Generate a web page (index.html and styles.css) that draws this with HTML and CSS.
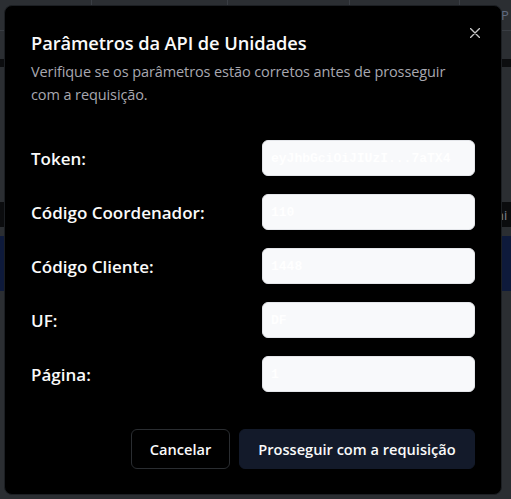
FILE: index.html
```html
<!DOCTYPE html>
<html lang="pt-BR">
<head>
<meta charset="utf-8">
<title>Parâmetros da API de Unidades</title>
<link rel="stylesheet" href="styles.css">
</head>
<body>
<div class="page">
  <div class="table-head">
    <div class="th th-1"></div>
    <div class="th th-2"></div>
    <div class="th th-3"></div>
    <div class="th th-4"></div>
    <div class="th th-5">P</div>
  </div>
  <div class="band-dark-thin"></div>
  <div class="spacer-a"></div>
  <div class="band-dark">ni</div>
  <div class="spacer-b"></div>
  <div class="band-navy"></div>
</div>

<div class="modal" role="dialog" aria-labelledby="modal-title">
  <button class="close" aria-label="Fechar">
    <svg width="10" height="10" viewBox="0 0 10 10"><path d="M0.5 0.5 L9.5 9.5 M9.5 0.5 L0.5 9.5" stroke="#c8c8c8" stroke-width="1.4" stroke-linecap="round" fill="none"/></svg>
  </button>
  <h2 class="title" id="modal-title">Parâmetros da API de Unidades</h2>
  <p class="desc">Verifique se os parâmetros estão corretos antes de prosseguir com a requisição.</p>

  <div class="form">
    <label class="label">Token:</label>
    <div class="input">eyJhbGciOiJIUzI...7aTX4</div>
    <label class="label">Código Coordenador:</label>
    <div class="input">110</div>
    <label class="label">Código Cliente:</label>
    <div class="input">1448</div>
    <label class="label">UF:</label>
    <div class="input">DF</div>
    <label class="label">Página:</label>
    <div class="input">1</div>
  </div>

  <div class="footer">
    <button class="btn btn-outline">Cancelar</button>
    <button class="btn btn-primary">Prosseguir com a requisição</button>
  </div>
</div>
</body>
</html>
```

FILE: styles.css
```css
* { box-sizing: border-box; }

html, body {
  margin: 0;
  padding: 0;
  width: 511px;
  height: 499px;
  overflow: hidden;
  background: #2b2e32;
  font-family: "Open Sans", "Noto Sans", sans-serif;
}

/* dimmed page behind the dialog */
.page {
  display: flex;
  flex-direction: column;
}

.table-head {
  display: grid;
  grid-template-columns: 92px 136px 122px 110px 1fr;
  height: 31px;
  border-bottom: 1px solid #3a3e44;
}

.th {
  border-right: 1px solid #3a3e44;
}

.th-5 {
  border-right: 0;
  color: #5f6a80;
  font-size: 13px;
  padding: 6px 0 0 41px;
  white-space: nowrap;
}

.band-dark-thin {
  height: 8px;
  margin-top: 28px;
  background: #0c0d0f;
}

.spacer-a { height: 135px; }

.band-dark {
  height: 25px;
  background: #0b0c0e;
  color: #7d8594;
  font-size: 13px;
  padding: 4px 0 0 496px;
  white-space: nowrap;
}

.spacer-b { height: 9px; }

.band-navy {
  height: 55px;
  background: #0e1a3b;
}

/* dialog */
.modal {
  position: fixed;
  left: 4px;
  top: 5px;
  width: 498px;
  height: 490px;
  background: #000;
  border: 1px solid #1c1f23;
  border-radius: 8px;
  padding: 25px 26px 26px;
  color: #fafafa;
}

.close {
  position: absolute;
  right: 20px;
  top: 21px;
  width: 12px;
  height: 12px;
  padding: 1px;
  border: 0;
  background: transparent;
  display: flex;
  align-items: center;
  justify-content: center;
  cursor: pointer;
}

.title {
  margin: 0;
  font-size: 18.3px;
  line-height: 24px;
  font-weight: 600;
  letter-spacing: -0.1px;
  color: #fafafa;
}

.desc {
  margin: 5px 0 0;
  max-width: 438px;
  font-size: 14.5px;
  line-height: 23px;
  color: #a8a8b0;
  letter-spacing: -0.1px;
}

.form {
  margin-top: 34px;
  display: grid;
  grid-template-columns: 1fr 213px;
  grid-auto-rows: 36px;
  row-gap: 18px;
  align-items: center;
}

.label {
  font-size: 17px;
  font-weight: 600;
  color: #fafafa;
  letter-spacing: 0;
}

.input {
  height: 36px;
  background: #f8f9fb;
  border: 1px solid #e4e6ea;
  border-radius: 6px;
  padding: 0 8px;
  display: flex;
  align-items: center;
  color: #ffffff;
  font-family: "Liberation Mono", monospace;
  font-size: 13px;
  font-weight: 700;
  white-space: nowrap;
  overflow: hidden;
}

.footer {
  margin-top: 37px;
  display: flex;
  justify-content: flex-end;
  gap: 9px;
}

.btn {
  height: 40px;
  border-radius: 6px;
  font-family: "Open Sans", "Noto Sans", sans-serif;
  font-size: 14.6px;
  font-weight: 600;
  color: #fafafa;
  padding: 0 14px;
  cursor: pointer;
  white-space: nowrap;
}

.btn-outline {
  width: 99px;
  background: #000;
  border: 1px solid #2a2d31;
}

.btn-primary {
  width: 236px;
  background: #131a2a;
  border: 1px solid #131a2a;
}
```
